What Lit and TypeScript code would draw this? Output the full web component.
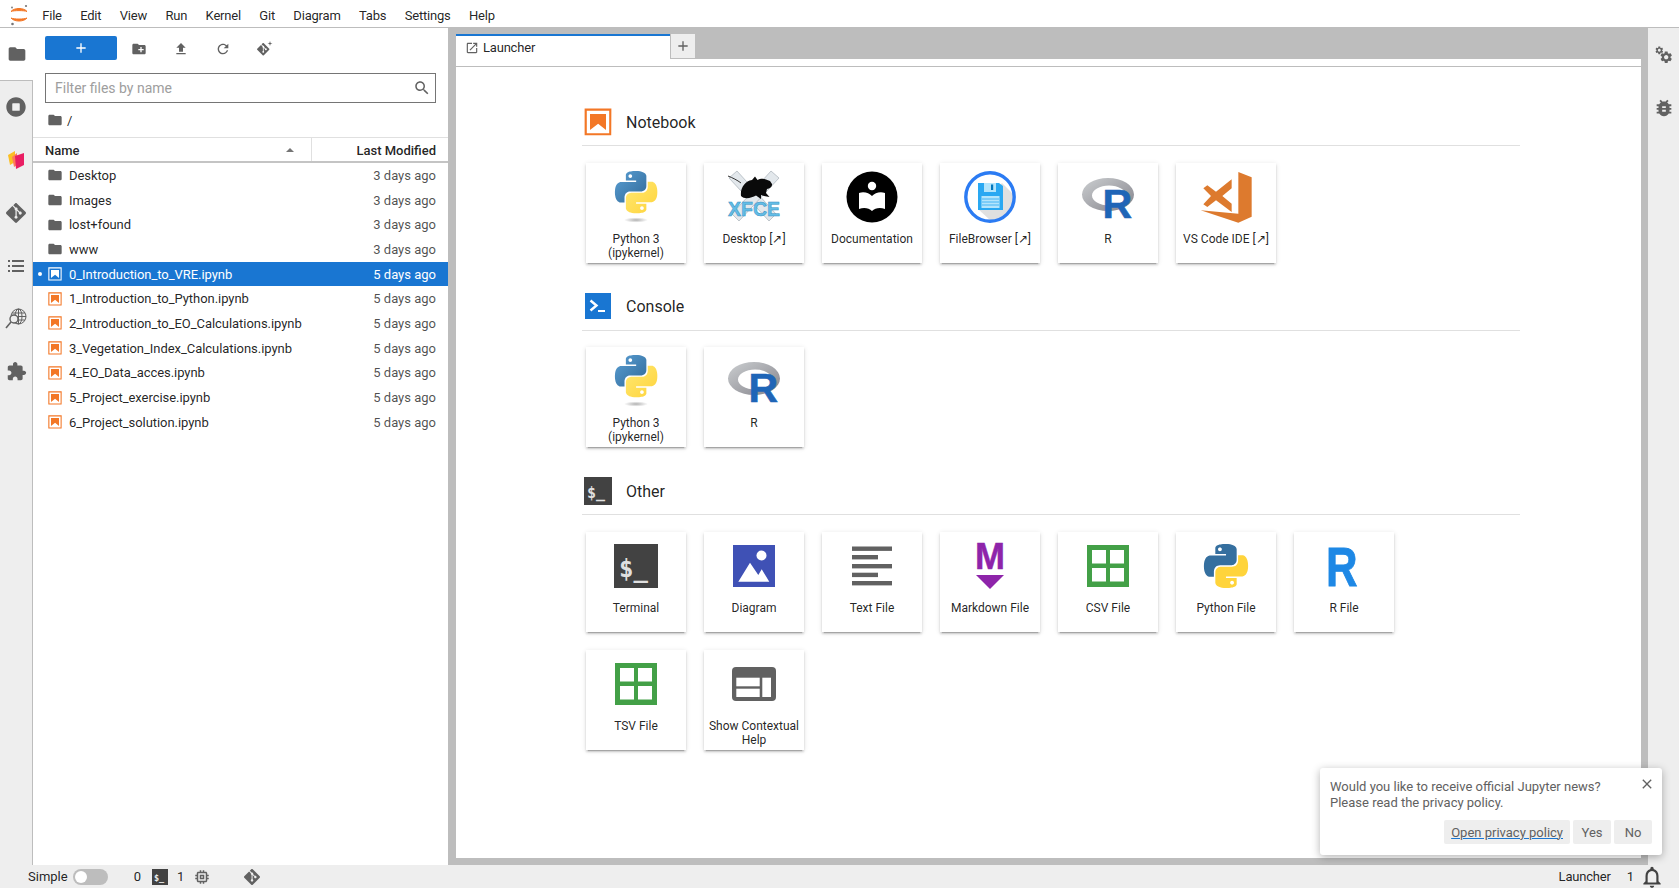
import { LitElement, html, css } from "lit";
import { customElement } from "lit/decorators.js";

const P = {
  folder: "M10 4H4c-1.1 0-1.99.9-1.99 2L2 18c0 1.1.9 2 2 2h16c1.1 0 2-.9 2-2V8c0-1.1-.9-2-2-2h-8l-2-2z",
  newFolder: "M20 6h-8l-2-2H4c-1.11 0-1.99.89-1.99 2L2 18c0 1.11.89 2 2 2h16c1.11 0 2-.89 2-2V8c0-1.11-.89-2-2-2zm-1 8h-3v3h-2v-3h-3v-2h3V9h2v3h3v2z",
  upload: "M9 16h6v-6h4l-7-7-7 7h4zm-4 2h14v2H5z",
  refresh: "M17.65 6.35C16.2 4.9 14.21 4 12 4c-4.42 0-7.99 3.58-7.99 8s3.57 8 7.99 8c3.73 0 6.84-2.55 7.73-6h-2.08c-.82 2.33-3.04 4-5.65 4-3.31 0-6-2.69-6-6s2.69-6 6-6c1.66 0 3.14.69 4.22 1.78L13 11h7V4l-2.35 2.35z",
  git: "M23.546 10.93L13.067.452c-.604-.603-1.582-.603-2.188 0L8.708 2.627l2.76 2.76c.645-.215 1.379-.07 1.889.441.516.515.658 1.258.438 1.9l2.658 2.66c.645-.223 1.387-.078 1.9.435.721.72.721 1.884 0 2.604-.719.719-1.881.719-2.6 0-.539-.541-.674-1.337-.404-1.996L12.86 8.955v6.525c.176.086.342.203.488.348.713.721.713 1.883 0 2.6-.719.721-1.889.721-2.609 0-.719-.719-.719-1.879 0-2.598.182-.18.387-.316.605-.406V8.835c-.217-.091-.424-.222-.6-.401-.545-.545-.676-1.342-.396-2.009L7.636 3.7.45 10.881c-.6.605-.6 1.584 0 2.189l10.48 10.477c.604.604 1.582.604 2.186 0l10.43-10.43c.605-.603.605-1.582 0-2.187",
  search: "M15.5 14h-.79l-.28-.27C15.41 12.59 16 11.11 16 9.5 16 5.91 13.09 3 9.5 3S3 5.91 3 9.5 5.91 16 9.5 16c1.61 0 3.09-.59 4.23-1.57l.27.28v.79l5 4.99L20.49 19l-4.99-5zm-6 0C7.01 14 5 11.99 5 9.5S7.01 5 9.5 5 14 7.01 14 9.5 11.99 14 9.5 14z",
  launch: "M19 19H5V5h7V3H5c-1.11 0-2 .9-2 2v14c0 1.1.89 2 2 2h14c1.1 0 2-.9 2-2v-7h-2v7zM14 3v2h3.59l-9.83 9.83 1.41 1.41L19 6.41V10h2V3h-7z",
  puzzle: "M20.5 11H19V7c0-1.1-.9-2-2-2h-4V3.5C13 2.12 11.88 1 10.5 1S8 2.12 8 3.5V5H4c-1.1 0-1.99.9-1.99 2v3.8H3.5c1.49 0 2.7 1.21 2.7 2.7s-1.21 2.7-2.7 2.7H2V20c0 1.1.9 2 2 2h3.8v-1.5c0-1.49 1.21-2.7 2.7-2.7 1.49 0 2.7 1.21 2.7 2.7V22H17c1.1 0 2-.9 2-2v-4h1.5c1.38 0 2.5-1.12 2.5-2.5S21.88 11 20.5 11z",
  gear: "M19.14 12.94c.04-.3.06-.61.06-.94 0-.32-.02-.64-.07-.94l2.03-1.58c.18-.14.23-.41.12-.61l-1.92-3.32c-.12-.22-.37-.29-.59-.22l-2.39.96c-.5-.38-1.03-.7-1.62-.94l-.36-2.54c-.04-.24-.24-.41-.48-.41h-3.84c-.24 0-.43.17-.47.41l-.36 2.54c-.59.24-1.13.57-1.62.94l-2.39-.96c-.22-.08-.47 0-.59.22L2.74 8.87c-.12.21-.08.47.12.61l2.03 1.58c-.05.3-.09.63-.09.94s.02.64.07.94l-2.03 1.58c-.18.14-.23.41-.12.61l1.92 3.32c.12.22.37.29.59.22l2.39-.96c.5.38 1.03.7 1.62.94l.36 2.54c.05.24.24.41.48.41h3.84c.24 0 .44-.17.47-.41l.36-2.54c.59-.24 1.13-.56 1.62-.94l2.39.96c.22.08.47 0 .59-.22l1.92-3.32c.12-.22.07-.47-.12-.61l-2.01-1.58zM12 15.6c-1.98 0-3.6-1.62-3.6-3.6s1.62-3.6 3.6-3.6 3.6 1.62 3.6 3.6-1.62 3.6-3.6 3.6z",
  bug: "M20 8h-2.81c-.45-.78-1.07-1.45-1.82-1.96L17 4.41 15.59 3l-2.17 2.17C12.96 5.06 12.49 5 12 5c-.49 0-.96.06-1.41.17L8.41 3 7 4.41l1.62 1.63C7.88 6.55 7.26 7.22 6.81 8H4v2h2.09c-.05.33-.09.66-.09 1v1H4v2h2v1c0 .34.04.67.09 1H4v2h2.81c1.04 1.79 2.97 3 5.19 3s4.15-1.21 5.19-3H20v-2h-2.09c.05-.33.09-.66.09-1v-1h2v-2h-2v-1c0-.34-.04-.67-.09-1H20V8zm-6 8h-4v-2h4v2zm0-4h-4v-2h4v2z",
  bell: "M12 22c1.1 0 2-.9 2-2h-4c0 1.1.89 2 2 2zm6-6v-5c0-3.07-1.64-5.64-4.5-6.32V4c0-.83-.67-1.5-1.5-1.5s-1.5.67-1.5 1.5v.68C7.63 5.36 6 7.92 6 11v5l-2 2v1h16v-1l-2-2zm-2 1H8v-6c0-2.48 1.51-4.5 4-4.5s4 2.02 4 4.5v6z",
  cpu: "M15 9H9v6h6V9zm-2 4h-2v-2h2v2zm8-2V9h-2V7c0-1.1-.9-2-2-2h-2V3h-2v2h-2V3H9v2H7c-1.1 0-2 .9-2 2v2H3v2h2v2H3v2h2v2c0 1.1.9 2 2 2h2v2h2v-2h2v2h2v-2h2c1.1 0 2-.9 2-2v-2h2v-2h-2v-2h2zm-4 6H7V7h10v10z",
  close: "M19 6.41L17.59 5 12 10.59 6.41 5 5 6.41 10.59 12 5 17.59 6.41 19 12 13.41 17.59 19 19 17.59 13.41 12z",
  plus: "M19 13h-6v6h-2v-6H5v-2h6V5h2v6h6v2z",
  pyBlue: "M14.25.18l.9.2.73.26.59.3.45.32.34.34.25.34.16.33.1.3.04.26.02.2-.01.13V8.5l-.05.63-.13.55-.21.46-.26.38-.3.31-.33.25-.35.19-.35.14-.33.1-.3.07-.26.04-.21.02H8.77l-.69.05-.59.14-.5.22-.41.27-.33.32-.27.35-.2.36-.15.37-.1.35-.07.32-.04.27-.02.21v3.06H3.17l-.21-.03-.28-.07-.32-.12-.35-.18-.36-.26-.36-.36-.35-.46-.32-.59-.28-.73-.21-.88-.14-1.05-.05-1.23.06-1.22.16-1.04.24-.87.32-.71.36-.57.4-.44.42-.33.42-.24.4-.16.36-.1.32-.05.24-.01h.16l.06.01h8.16v-.83H6.18l-.01-2.75-.02-.37.05-.34.11-.31.17-.28.25-.26.31-.23.38-.2.44-.18.51-.15.58-.12.64-.1.71-.06.77-.04.84-.02 1.27.05zm-6.3 1.98l-.23.33-.08.41.08.41.23.34.33.22.41.09.41-.09.33-.22.23-.34.08-.41-.08-.41-.23-.33-.33-.22-.41-.09-.41.09z",
  pyYellow: "M21.04 6.11l.28.06.32.12.35.18.36.27.36.35.35.47.32.59.28.73.21.88.14 1.04.05 1.23-.06 1.23-.16 1.04-.24.86-.32.71-.36.57-.4.45-.42.33-.42.24-.4.16-.36.09-.32.05-.24.02-.16-.01h-8.22v.82h5.84l.01 2.76.02.36-.05.34-.11.31-.17.29-.25.25-.31.24-.38.2-.44.17-.51.15-.58.13-.64.09-.71.07-.77.04-.84.01-1.27-.04-1.07-.14-.9-.2-.73-.25-.59-.3-.45-.33-.34-.34-.25-.34-.16-.33-.1-.3-.04-.25-.02-.2.01-.13v-5.34l.05-.64.13-.54.21-.46.26-.38.3-.32.33-.24.35-.2.35-.14.33-.1.3-.06.26-.04.21-.02.13-.01h5.84l.69-.05.59-.14.5-.21.41-.28.33-.32.27-.35.2-.36.15-.36.1-.35.07-.32.04-.28.02-.21V6.07h2.09l.14.01zm-6.47 14.25l-.23.33-.08.41.08.41.23.33.33.23.41.08.41-.08.33-.23.23-.33.08-.41-.08-.41-.23-.33-.33-.23-.41-.08-.41.08z",
};

const mat = (d: string, size = 16, fill = "#616161") => html`<svg class="ico" width=${size} height=${size} viewBox="0 0 24 24" fill=${fill}><path fill-rule="evenodd" d=${d}></path></svg>`;

const notebookIcon = (size: number, color = "#f37726") => html`<svg class="ico" width=${size} height=${size} viewBox="0 0 22 22" fill=${color}>
  <path d="M18.7 3.3v15.4H3.3V3.3h15.4m1.5-1.5H1.8v18.3h18.3l.1-18.3z"></path>
  <path d="M16.5 16.5l-5.4-4.3-5.6 4.3v-11h11z"></path>
</svg>`;

const consoleIcon = html`<svg class="ico" width="32" height="32" viewBox="0 0 32 32">
  <rect x="3" y="3" width="26" height="26" fill="#1976d2"></rect>
  <path d="M8.5 10.5l6 5-6 5" fill="none" stroke="#fff" stroke-width="2.4"></path>
  <rect x="16" y="20" width="7" height="2" fill="#fff"></rect>
</svg>`;

const termHeader = html`<svg class="ico" width="32" height="32" viewBox="0 0 32 32">
  <rect x="2" y="2" width="28" height="28" fill="#424242"></rect>
  <text x="5" y="23" font-family="'DejaVu Sans Mono',monospace" font-weight="700" font-size="15" fill="#e0e0e0">$_</text>
</svg>`;

const pythonKernel = html`<svg class="ico" width="52" height="52" viewBox="0 0 52 52">
  <defs>
    <linearGradient id="pb" x1="0" y1="0" x2="1" y2="1"><stop offset="0" stop-color="#5a9fd4"></stop><stop offset="1" stop-color="#306998"></stop></linearGradient>
    <linearGradient id="py" x1="1" y1="1" x2="0" y2="0"><stop offset="0" stop-color="#ffd43b"></stop><stop offset="1" stop-color="#ffe873"></stop></linearGradient>
    <radialGradient id="ps"><stop offset="0" stop-color="#b0b0b0"></stop><stop offset="1" stop-color="#fff"></stop></radialGradient>
  </defs>
  <g transform="translate(5 0) scale(1.76)">
    <path fill="url(#pb)" fill-rule="evenodd" d=${P.pyBlue}></path>
    <path fill="url(#py)" fill-rule="evenodd" d=${P.pyYellow}></path>
  </g>
  <ellipse cx="26" cy="49" rx="12" ry="2.6" fill="url(#ps)"></ellipse>
</svg>`;

const pythonFile = html`<svg class="ico" width="44" height="44" viewBox="0 0 24 24">
  <path fill="#356f9f" fill-rule="evenodd" d=${P.pyBlue}></path>
  <path fill="#ffd43b" fill-rule="evenodd" d=${P.pyYellow}></path>
</svg>`;

const rKernel = html`<svg class="ico" width="52" height="52" viewBox="0 0 52 52">
  <defs><linearGradient id="rg" x1="0" y1="0" x2="1" y2="1"><stop offset="0" stop-color="#cbced0"></stop><stop offset="1" stop-color="#84838b"></stop></linearGradient></defs>
  <path fill="url(#rg)" fill-rule="evenodd" d="M0 23.5a26 16.5 0 1 0 52 0a26 16.5 0 1 0 -52 0zM10 24.5a17 10 0 1 1 34 0a17 10 0 1 1 -34 0z"></path>
  <text x="20.5" y="47" font-family="'Liberation Sans',sans-serif" font-weight="700" font-size="41" fill="#1f65b7" stroke="#1f65b7" stroke-width=".6">R</text>
</svg>`;

const xfce = html`<svg class="ico" width="52" height="52" viewBox="0 0 52 52">
  <path d="M9 0L48 43L41 50L1 7Z" fill="#e3e8ec" stroke="#a8b0b8" stroke-width=".7"></path>
  <path d="M43 0L4 43L11 50L51 7Z" fill="#e3e8ec" stroke="#a8b0b8" stroke-width=".7"></path>
  <path d="M0 5C5 7 9 9 13 12" fill="none" stroke="#333" stroke-width="1"></path>
  <path d="M13 25C12 17 17 10 24 9L27 5.5L29.5 9C32 7.5 36 7.5 38 8.5L42 10L44 13C44.5 15.5 42 17.5 39 18L38 22L41.5 26L36 25L33 24L33 28L28 24.5C24 26.5 17 29 13 25Z" fill="#0a0a0a"></path>
  <text x="0" y="45" textLength="52" lengthAdjust="spacingAndGlyphs" font-family="'Liberation Sans',sans-serif" font-weight="700" font-size="21" fill="#62bde6" stroke="#3a92c4" stroke-width=".5">XFCE</text>
</svg>`;

const docs = html`<svg class="ico" width="52" height="52" viewBox="0 0 52 52">
  <circle cx="26" cy="26" r="25.5" fill="#000"></circle>
  <circle cx="26" cy="15" r="4.2" fill="#fff"></circle>
  <path d="M13 22C18 20 23 22 26 25C29 22 34 20 39 22V38C34 36 29 37 26 40C23 37 18 36 13 38Z" fill="#fff"></path>
</svg>`;

const fileBrowser = html`<svg class="ico" width="52" height="52" viewBox="0 0 52 52">
  <defs><clipPath id="fc"><circle cx="26" cy="26" r="24"></circle></clipPath></defs>
  <path d="M38 12L60 34L38 60L14 38Z" fill="#e0e0e0" clip-path="url(#fc)"></path>
  <circle cx="26" cy="26" r="24.2" fill="none" stroke="#2b7bf3" stroke-width="3.4"></circle>
  <path d="M14 12H35L39 15V39H14Z" fill="#29a8f2"></path>
  <rect x="20" y="12" width="12" height="9" fill="#b3e5fc"></rect>
  <rect x="27" y="13.5" width="2.2" height="5.5" fill="#0277bd"></rect>
  <rect x="17.5" y="25" width="18" height="12" fill="#b3e5fc"></rect>
  <path d="M18 28h17M18 31h17M18 34h17" stroke="#29a8f2" stroke-width=".8"></path>
</svg>`;

const vscode = html`<svg class="ico" width="52" height="52" viewBox="810 60 156 156" fill="#dd7a2e">
  <path d="M925 63L965 79V197L925 215L812 178L925 188Z"></path>
  <path fill-rule="evenodd" d="M905 85L858 122L832 103L820 112L843 135L820 160L832 168L858 148L905 183ZM905 112L877 135L905 158Z"></path>
</svg>`;

const terminal = html`<svg class="ico" width="44" height="44" viewBox="0 0 44 44">
  <rect width="44" height="44" fill="#424242"></rect>
  <text x="5" y="33" font-family="'DejaVu Sans Mono',monospace" font-weight="700" font-size="24" fill="#e0e0e0">$_</text>
</svg>`;

const diagram = html`<svg class="ico" width="42" height="42" viewBox="0 0 42 42">
  <rect width="42" height="42" fill="#3f51b5"></rect>
  <circle cx="28.5" cy="10.5" r="5" fill="#fff"></circle>
  <path d="M5.3 36.7L17 17.7L25.3 30L28.7 24.3L36.3 36.7Z" fill="#fff"></path>
</svg>`;

const textFile = html`<svg class="ico" width="40" height="40" viewBox="0 0 40 40" fill="#616161">
  <rect y="0.5" width="40" height="4.4"></rect><rect y="9" width="26" height="4.4"></rect>
  <rect y="18" width="40" height="4.4"></rect><rect y="26.7" width="26" height="4.4"></rect>
  <rect y="35" width="40" height="4.4"></rect>
</svg>`;

const markdown = html`<svg class="ico" width="32" height="48" viewBox="0 0 32 48">
  <text x="1" y="27" font-family="'Liberation Sans',sans-serif" font-weight="700" font-size="36" fill="#8e24aa" stroke="#8e24aa" stroke-width=".5">M</text>
  <path d="M2 33H30L16 47Z" fill="#8e24aa"></path>
</svg>`;

const grid = html`<svg class="ico" width="42" height="42" viewBox="0 0 42 42">
  <rect width="42" height="42" fill="#43a047"></rect>
  <g fill="#fff"><rect x="5" y="5" width="14" height="13.5"></rect><rect x="23" y="5" width="14" height="13.5"></rect>
  <rect x="5" y="23" width="14" height="13.5"></rect><rect x="23" y="23" width="14" height="13.5"></rect></g>
</svg>`;

const rFile = html`<svg class="ico" width="32" height="42" viewBox="0 0 32 42">
  <text transform="translate(-2 41) scale(.78 1)" font-family="'Liberation Sans',sans-serif" font-weight="700" font-size="56" fill="#1e88e5" stroke="#1e88e5" stroke-width=".8">R</text>
</svg>`;

const contextHelp = html`<svg class="ico" width="44" height="34" viewBox="0 0 44 34">
  <rect width="44" height="34" rx="4" fill="#616161"></rect>
  <g fill="#fff"><rect x="4.3" y="10.7" width="23.4" height="8.6"></rect><rect x="4.3" y="21.7" width="23.4" height="8.3"></rect><rect x="30.3" y="10.7" width="8.7" height="19.3"></rect></g>
</svg>`;

const jupyterLogo = html`<svg class="ico" width="20" height="24" viewBox="0 0 20 24">
  <path d="M2 9.5C5 5.5 15 5.5 18 9.5C15 8.3 5 8.3 2 9.5Z" fill="#f37726" stroke="#f37726" stroke-width="1"></path>
  <path d="M2 16C5 20 15 20 18 16C15 17.4 5 17.4 2 16Z" fill="#f37726" stroke="#f37726" stroke-width="1"></path>
  <circle cx="17" cy="4" r="1.1" fill="#767677"></circle><circle cx="3" cy="5.5" r=".9" fill="#767677"></circle><circle cx="3.5" cy="22" r="1.3" fill="#767677"></circle>
</svg>`;

const extIcon = html`<svg class="ico" width="18" height="20" viewBox="0 0 18 20">
  <path d="M1 5L8 1V12L3 15Z" fill="#fbbf24"></path>
  <path d="M5 7L10 3V15L7 17Z" fill="#ff7a59"></path>
  <path d="M8 6L17 3V15L9 19Z" fill="#e91e63"></path>
</svg>`;

const listIcon = html`<svg class="ico" width="18" height="18" viewBox="0 0 18 18" fill="#616161">
  <rect x="1" y="3" width="2" height="2"></rect><rect x="5" y="3" width="12" height="2"></rect>
  <rect x="1" y="8" width="2" height="2"></rect><rect x="5" y="8" width="12" height="2"></rect>
  <rect x="1" y="13" width="2" height="2"></rect><rect x="5" y="13" width="12" height="2"></rect>
</svg>`;

const globeIcon = html`<svg class="ico" width="22" height="22" viewBox="0 0 22 22" fill="none" stroke="#616161" stroke-width="1">
  <circle cx="13.5" cy="8.5" r="7.5"></circle>
  <ellipse cx="13.5" cy="8.5" rx="3.5" ry="7.5"></ellipse>
  <path d="M6 8.5H21M7 5H20M7 12H20M13.5 1V16"></path>
  <circle cx="9" cy="11" r="4" fill="#eee" stroke-width="1.4"></circle>
  <path d="M6 14L1 20" stroke-width="1.6"></path>
</svg>`;

const gearsIcon = html`<svg class="ico" width="20" height="20" viewBox="0 0 20 20" fill="#616161">
  <g transform="translate(.5 .5) scale(.4)"><path fill-rule="evenodd" d=${P.gear}></path></g>
  <g transform="translate(5 5) scale(.6)"><path fill-rule="evenodd" d=${P.gear}></path></g>
</svg>`;

const gitSpark = html`<svg class="ico" width="16" height="16" viewBox="0 0 16 16" fill="#616161">
  <g transform="translate(0 2) scale(.52)"><path d=${P.git}></path></g>
  <path d="M13 0l.6 1.9 1.9.6-1.9.6-.6 1.9-.6-1.9-1.9-.6 1.9-.6z"></path>
</svg>`;

const miniTerm = html`<svg class="ico" width="16" height="16" viewBox="0 0 16 16">
  <rect width="16" height="16" fill="#424242"></rect>
  <text x="2" y="12" font-family="'DejaVu Sans Mono',monospace" font-weight="700" font-size="8.5" fill="#eee">$_</text>
</svg>`;

const stopPath = "M256 8C119 8 8 119 8 256s111 248 248 248 248-111 248-248S393 8 256 8zm96 328c0 8.8-7.2 16-16 16H176c-8.8 0-16-7.2-16-16V176c0-8.8 7.2-16 16-16h160c8.8 0 16 7.2 16 16v160z";

const MENU = ["File", "Edit", "View", "Run", "Kernel", "Git", "Diagram", "Tabs", "Settings", "Help"];

const FILES = [
  { name: "Desktop", date: "3 days ago", dir: true },
  { name: "Images", date: "3 days ago", dir: true },
  { name: "lost+found", date: "3 days ago", dir: true },
  { name: "www", date: "3 days ago", dir: true },
  { name: "0_Introduction_to_VRE.ipynb", date: "5 days ago", selected: true },
  { name: "1_Introduction_to_Python.ipynb", date: "5 days ago" },
  { name: "2_Introduction_to_EO_Calculations.ipynb", date: "5 days ago" },
  { name: "3_Vegetation_Index_Calculations.ipynb", date: "5 days ago" },
  { name: "4_EO_Data_acces.ipynb", date: "5 days ago" },
  { name: "5_Project_exercise.ipynb", date: "5 days ago" },
  { name: "6_Project_solution.ipynb", date: "5 days ago" },
];

const SECTIONS = [
  {
    title: "Notebook",
    icon: notebookIcon(32),
    cards: [
      { label: "Python 3 (ipykernel)", icon: pythonKernel },
      { label: "Desktop [↗]", icon: xfce },
      { label: "Documentation", icon: docs },
      { label: "FileBrowser [↗]", icon: fileBrowser },
      { label: "R", icon: rKernel },
      { label: "VS Code IDE [↗]", icon: vscode },
    ],
  },
  {
    title: "Console",
    icon: consoleIcon,
    cards: [
      { label: "Python 3 (ipykernel)", icon: pythonKernel },
      { label: "R", icon: rKernel },
    ],
  },
  {
    title: "Other",
    icon: termHeader,
    cards: [
      { label: "Terminal", icon: terminal },
      { label: "Diagram", icon: diagram },
      { label: "Text File", icon: textFile },
      { label: "Markdown File", icon: markdown },
      { label: "CSV File", icon: grid },
      { label: "Python File", icon: pythonFile },
      { label: "R File", icon: rFile },
      { label: "TSV File", icon: grid },
      { label: "Show Contextual Help", icon: contextHelp },
    ],
  },
];

@customElement("app-root")
export class AppRoot extends LitElement {
  static styles = css`
    :host {
      display: flex;
      flex-direction: column;
      position: relative;
      width: 1679px;
      height: 888px;
      overflow: hidden;
      font-family: Roboto, "Noto Sans", sans-serif;
      font-size: 13px;
      color: rgba(0, 0, 0, 0.87);
      background: #fff;
    }
    .ico { display: block; flex: none; overflow: visible; }

    .menubar {
      display: flex;
      align-items: center;
      height: 27px;
      flex: none;
      border-bottom: 1px solid #bdbdbd;
      padding-left: 6px;
    }
    .logo { width: 26px; display: flex; justify-content: center; margin-right: 1px; }
    .menu-item { padding: 3px 9.2px 0; letter-spacing: -0.2px; }

    .shell { flex: 1; display: flex; min-height: 0; background: #bdbdbd; }

    .sidebar { flex: none; width: 33px; background: #eee; display: flex; flex-direction: column; }
    .sidebar.left { border-right: 1px solid #bdbdbd; box-sizing: border-box; }
    .sidebar.right { width: 31px; }
    .side-tab { height: 53px; display: flex; align-items: center; justify-content: center; flex: none; }
    .sidebar.left .side-tab { padding-bottom: 2px; box-sizing: border-box; }
    .sidebar.left .side-tab.active {
      background: #fff;
      margin-right: -1px;
      height: 53px;
      padding-bottom: 0;
      border-bottom: 1px solid #bdbdbd;
    }

    .panel { flex: none; width: 415px; background: #fff; display: flex; flex-direction: column; }
    .tools { display: flex; align-items: center; padding: 8px 0 0 12px; }
    .new-btn {
      width: 72px;
      height: 24px;
      background: #1976d2;
      border-radius: 2px;
      display: flex;
      align-items: center;
      justify-content: center;
      margin-right: 1px;
    }
    .tool { width: 42px; display: flex; justify-content: center; padding-top: 2px; }
    .filter {
      margin: 13px 12px 0;
      height: 30px;
      box-sizing: border-box;
      border: 1px solid #757575;
      display: flex;
      align-items: center;
      justify-content: space-between;
      padding: 0 4px 0 9px;
      color: #9e9e9e;
      font-size: 14px;
    }
    .crumbs { height: 34px; display: flex; align-items: center; padding-left: 14px; gap: 4px; }
    .list-head {
      height: 26px;
      box-sizing: border-box;
      display: flex;
      padding-top: 1px;
      border-top: 1px solid #e0e0e0;
      border-bottom: 2px solid #c4c4c4;
      font-weight: 500;
    }
    .col-name { width: 279px; box-sizing: border-box; margin-top: -1px; padding: 1px 17px 0 12px; display: flex; align-items: center; justify-content: space-between; border-right: 1px solid #e0e0e0; }
    .col-date { flex: 1; display: flex; align-items: center; justify-content: flex-end; padding-right: 12px; }
    .caret { width: 0; height: 0; border-left: 4px solid transparent; border-right: 4px solid transparent; border-bottom: 4px solid #757575; }
    .row { height: 24.7px; display: flex; align-items: center; padding: 0 12px 0 14px; position: relative; }
    .row .name { margin-left: 6px; flex: 1; white-space: nowrap; letter-spacing: -0.05px; }
    .row .date { color: rgba(0, 0, 0, 0.7); }
    .row.selected { background: #1976d2; color: #fff; }
    .row.selected .date { color: #fff; }
    .dot { position: absolute; left: 5px; top: 10px; width: 4px; height: 4px; border-radius: 50%; background: #fff; }

    .main-wrap { flex: 1; min-width: 0; margin: 0 7px 7px 8px; display: flex; flex-direction: column; }
    .tabbar { height: 31px; flex: none; padding-top: 6px; box-sizing: border-box; display: flex; }
    .tab {
      width: 214px;
      box-sizing: border-box;
      background: #fff;
      border-top: 2px solid #1976d2;
      display: flex;
      align-items: center;
      gap: 4px;
      padding-left: 9px;
      letter-spacing: -0.2px;
    }
    .tab-add {
      width: 25px;
      background: #eee;
      box-sizing: border-box;
      border-left: 1px solid #bdbdbd;
      border-bottom: 1px solid #bdbdbd;
      display: flex;
      align-items: center;
      justify-content: center;
    }
    .tab-strip { height: 8px; flex: none; background: #fff; border-bottom: 1px solid #bdbdbd; box-sizing: border-box; }

    .launcher { flex: 1; background: #fff; padding: 38.5px 0 0 126px; }
    .section { width: 938px; margin-bottom: 27.4px; }
    .section-head { display: flex; align-items: center; gap: 12px; padding-bottom: 7.5px; border-bottom: 1px solid #e0e0e0; font-size: 16px; }
    .section-head span { padding-top: 1.5px; }
    .cards { display: flex; flex-wrap: wrap; gap: 18px; padding: 16.7px 0 0 4px; width: 900px; }
    .card {
      width: 100px;
      height: 100px;
      background: #fff;
      box-shadow: 0 3px 1px -2px rgba(0, 0, 0, 0.2), 0 2px 2px 0 rgba(0, 0, 0, 0.14), 0 1px 5px 0 rgba(0, 0, 0, 0.12);
    }
    .card-icon { height: 68px; display: flex; align-items: center; justify-content: center; }
    .card-label { font-size: 12px; line-height: 14px; text-align: center; padding: 0 3px; margin-top: 1px; }

    .status { height: 23px; flex: none; background: #eee; display: flex; align-items: center; padding: 0 14px 0 28px; }
    .toggle { width: 35px; height: 16px; border-radius: 8px; background: #bdbdbd; margin-left: 5px; position: relative; }
    .toggle::after { content: ""; position: absolute; left: 2px; top: 2px; width: 12px; height: 12px; border-radius: 50%; background: #fff; }
    .st-0 { margin-left: 26px; }
    .st-term { margin-left: 11px; }
    .st-1 { margin-left: 9px; }
    .st-cpu { margin-left: 9px; }
    .st-git { margin-left: 33px; }
    .spacer { flex: 1; }
    .st-tab { letter-spacing: -0.2px; }
    .st-count { margin: 0 5px 0 16px; }

    .notice {
      position: absolute;
      top: 768px;
      left: 1320px;
      width: 342px;
      height: 87px;
      box-sizing: border-box;
      background: #fff;
      border-radius: 3px;
      box-shadow: 0 2px 8px rgba(0, 0, 0, 0.3);
      padding: 11px 10px 0;
      color: #616161;
    }
    .notice p { margin: 0; line-height: 16px; }
    .notice-close { position: absolute; right: 7px; top: 8px; }
    .notice-actions { display: flex; justify-content: flex-end; gap: 3px; margin-top: 9px; }
    .notice-btn { height: 24px; display: flex; align-items: center; justify-content: center; background: #eee; border-radius: 2px; padding: 0 7px; min-width: 24px; }
    .notice-btn u { text-decoration-color: #1976d2; }
  `;

  render() {
    return html`
      <div class="menubar">
        <div class="logo">${jupyterLogo}</div>
        ${MENU.map((m) => html`<div class="menu-item">${m}</div>`)}
      </div>
      <div class="shell">
        ${this.leftBar()}
        ${this.filePanel()}
        <div class="main-wrap">
          <div class="tabbar">
            <div class="tab">${mat(P.launch, 14)}<span>Launcher</span></div>
            <div class="tab-add">${mat(P.plus, 16)}</div>
          </div>
          <div class="tab-strip"></div>
          <div class="launcher">
            ${SECTIONS.map(
              (s) => html`
                <div class="section">
                  <div class="section-head">${s.icon}<span>${s.title}</span></div>
                  <div class="cards">
                    ${s.cards.map(
                      (c) => html`
                        <div class="card">
                          <div class="card-icon">${c.icon}</div>
                          <div class="card-label">${c.label}</div>
                        </div>
                      `
                    )}
                  </div>
                </div>
              `
            )}
          </div>
        </div>
        <div class="sidebar right">
          <div class="side-tab">${gearsIcon}</div>
          <div class="side-tab">${mat(P.bug, 22)}</div>
        </div>
      </div>
      <div class="status">
        <span>Simple</span>
        <div class="toggle"></div>
        <span class="st-0">0</span>
        <span class="st-term">${miniTerm}</span>
        <span class="st-1">1</span>
        <span class="st-cpu">${mat(P.cpu, 18)}</span>
        <span class="st-git">${mat(P.git, 16)}</span>
        <div class="spacer"></div>
        <span class="st-tab">Launcher</span>
        <span class="st-count">1</span>
        ${mat(P.bell, 26, "#424242")}
      </div>
      <div class="notice">
        <div class="notice-close">${mat(P.close, 16)}</div>
        <p>Would you like to receive official Jupyter news?<br />Please read the privacy policy.</p>
        <div class="notice-actions">
          <div class="notice-btn"><u>Open privacy policy</u></div>
          <div class="notice-btn">Yes</div>
          <div class="notice-btn">No</div>
        </div>
      </div>
    `;
  }

  leftBar() {
    return html`
      <div class="sidebar left">
        <div class="side-tab active">${mat(P.folder, 20)}</div>
        <div class="side-tab">
          <svg class="ico" width="20" height="20" viewBox="0 0 512 512" fill="#616161"><path d=${stopPath}></path></svg>
        </div>
        <div class="side-tab">${extIcon}</div>
        <div class="side-tab">${mat(P.git, 20)}</div>
        <div class="side-tab">${listIcon}</div>
        <div class="side-tab">${globeIcon}</div>
        <div class="side-tab">${mat(P.puzzle, 21)}</div>
      </div>
    `;
  }

  filePanel() {
    return html`
      <div class="panel">
        <div class="tools">
          <div class="new-btn">${mat(P.plus, 16, "#fff")}</div>
          <div class="tool">${mat(P.newFolder, 16)}</div>
          <div class="tool">${mat(P.upload, 16)}</div>
          <div class="tool">${mat(P.refresh, 16)}</div>
          <div class="tool">${gitSpark}</div>
        </div>
        <div class="filter"><span>Filter files by name</span>${mat(P.search, 18)}</div>
        <div class="crumbs">${mat(P.folder, 16)}<span>/</span></div>
        <div class="list-head">
          <div class="col-name"><span>Name</span><span class="caret"></span></div>
          <div class="col-date">Last Modified</div>
        </div>
        ${FILES.map(
          (f) => html`
            <div class="row ${f.selected ? "selected" : ""}">
              ${f.selected ? html`<span class="dot"></span>` : ""}
              ${f.dir ? mat(P.folder, 16) : notebookIcon(16, f.selected ? "#fff" : "#f37726")}
              <span class="name">${f.name}</span>
              <span class="date">${f.date}</span>
            </div>
          `
        )}
      </div>
    `;
  }
}
